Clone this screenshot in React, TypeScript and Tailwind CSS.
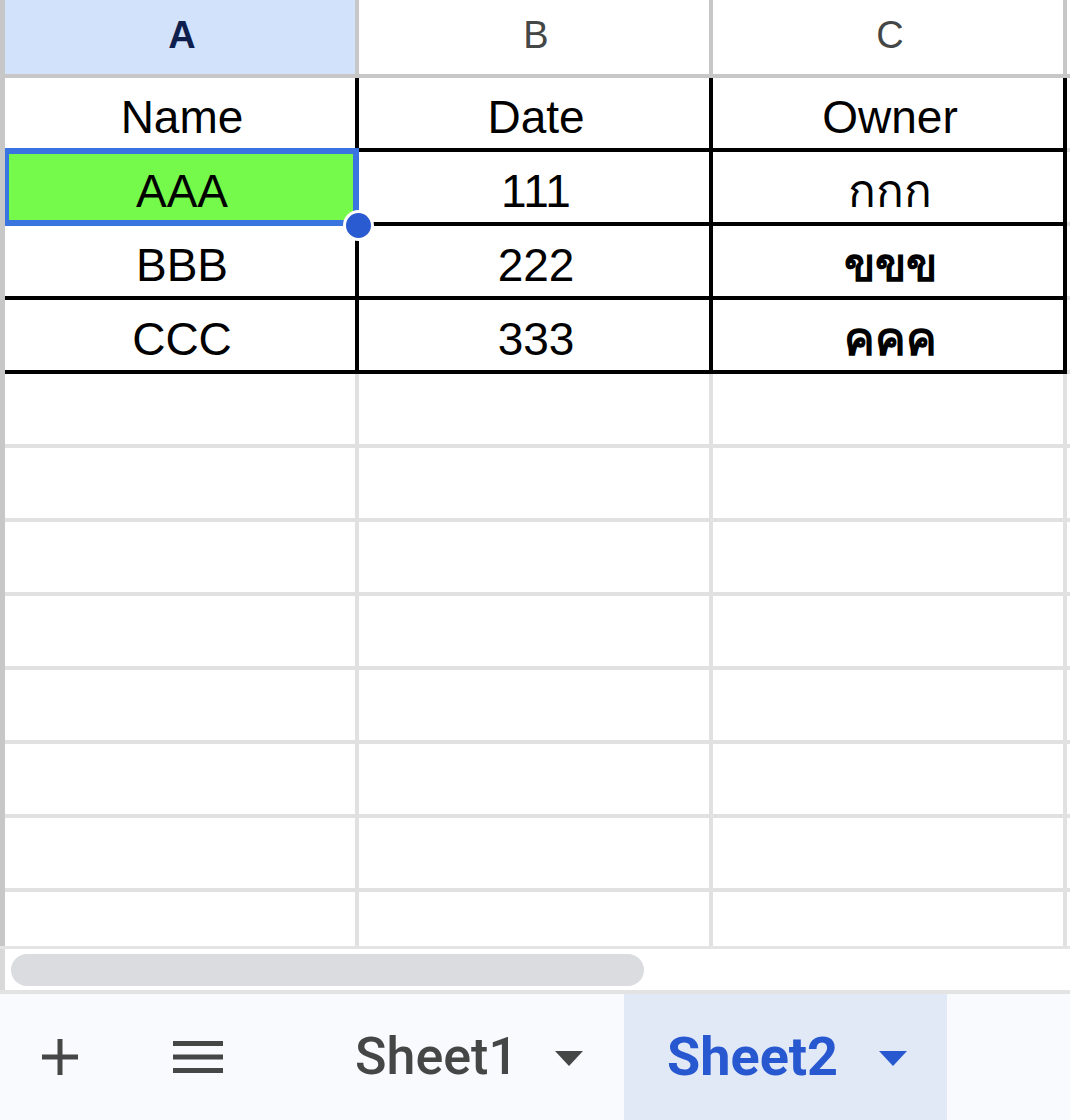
const cols = ["A", "B", "C"];

const rows = [
  ["Name", "Date", "Owner"],
  ["AAA", "111", "กกก"],
  ["BBB", "222", "ขขข"],
  ["CCC", "333", "คคค"],
];

const cellFont = "font-['Liberation_Sans','Noto_Sans','DejaVu_Sans',sans-serif]";

function HeaderRow() {
  return (
    <div className="flex h-[78px]">
      <div className="w-[5px] bg-[#c7c7c7]" />
      {cols.map((c, i) => (
        <div
          key={c}
          className={`flex w-[354px] items-center justify-center border-r-4 border-b-4 border-[#c7c7c7] pb-[5px] pl-1 text-[38px] leading-none ${
            i === 0 ? "bg-[#d3e2fb] font-bold text-[#0e1f4d]" : "bg-white text-[#444746]"
          }`}
        >
          {c}
        </div>
      ))}
      <div className="flex-1 border-b-4 border-[#c7c7c7]" />
    </div>
  );
}

function DataRow({ cells, index }: { cells: string[]; index: number }) {
  return (
    <div className="flex h-[74px]">
      <div className="w-[5px] bg-[#c7c7c7]" />
      {cells.map((text, i) => {
        const selected = index === 1 && i === 0;
        const thaiBold = i === 2 && index > 1;
        return (
          <div
            key={i}
            className={`relative flex w-[354px] items-end justify-center border-r-4 border-b-4 border-black pb-2 pl-1 text-[46px] leading-none text-black ${
              selected ? "bg-[#75fa4c]" : "bg-white"
            } ${thaiBold ? "font-bold" : ""}`}
          >
            {selected && (
              <div className="absolute -top-1 left-0 h-[78px] w-[354px] border-y-[6px] border-r-[6px] border-l-4 border-[#3a74e0]" />
            )}
            <span className="relative">{text}</span>
          </div>
        );
      })}
      <div className="flex-1 border-b-4 border-[#e1e1e1]" />
    </div>
  );
}

function EmptyRow({ last }: { last?: boolean }) {
  const b = last ? "" : "border-b-4";
  return (
    <div className={`flex ${last ? "h-[54px]" : "h-[74px]"}`}>
      <div className="w-[5px] bg-[#c7c7c7]" />
      {cols.map((c) => (
        <div key={c} className={`w-[354px] border-r-4 ${b} border-[#e1e1e1]`} />
      ))}
      <div className={`flex-1 ${b} border-[#e1e1e1]`} />
    </div>
  );
}

function Caret({ color }: { color: string }) {
  return (
    <svg width="28" height="15" viewBox="0 0 28 15">
      <path d="M0 0 L28 0 L14 15 Z" fill={color} />
    </svg>
  );
}

export default function App() {
  return (
    <div className={`flex h-[1120px] w-[1070px] flex-col overflow-hidden bg-white ${cellFont}`}>
      <div className="relative h-[946px] overflow-hidden">
        <HeaderRow />
        {rows.map((r, i) => (
          <DataRow key={i} cells={r} index={i} />
        ))}
        {Array.from({ length: 7 }).map((_, i) => (
          <EmptyRow key={i} />
        ))}
        <EmptyRow last />
        {/* fill handle */}
        <div className="absolute left-[343px] top-[210px] h-[31px] w-[31px] rounded-full border-[3px] border-white bg-[#2a5bd0]" />
      </div>

      {/* horizontal scrollbar */}
      <div className="flex h-[44px] border-t-[3px] border-[#e3e4e3]">
        <div className="w-[5px] bg-[#d9d9d9]" />
        <div className="flex flex-1 items-center pl-[6px]">
          <div className="h-[32px] w-[633px] rounded-full bg-[#dadce0]" />
        </div>
      </div>

      {/* sheet tabs */}
      <div className="flex h-[130px] items-stretch border-t-4 border-[#e3e3e3] bg-[#f8fafd] font-['Roboto',sans-serif]">
        <div className="flex w-[117px] items-center justify-center pl-[2px]">
          <svg width="36" height="36" viewBox="0 0 36 36">
            <rect x="15.5" y="0" width="5" height="36" fill="#444746" />
            <rect x="0" y="15.5" width="36" height="5" fill="#444746" />
          </svg>
        </div>
        <div className="flex w-[117px] items-center pl-[56px]">
          <svg width="50" height="33" viewBox="0 0 50 33">
            <rect x="0" y="0" width="50" height="5" fill="#444746" />
            <rect x="0" y="13.5" width="50" height="5" fill="#444746" />
            <rect x="0" y="27" width="50" height="5" fill="#444746" />
          </svg>
        </div>
        <div className="flex w-[390px] items-center pl-[121px]">
          <span className="text-[52px] font-medium leading-none text-[#444746]">Sheet1</span>
          <span className="ml-[37px] mt-[2px]">
            <Caret color="#444746" />
          </span>
        </div>
        <div className="flex w-[323px] items-center bg-[#e1e9f7] pl-[43px]">
          <span className="text-[54px] font-bold leading-none text-[#2858d0]">Sheet2</span>
          <span className="ml-[41px] mt-[2px]">
            <Caret color="#2858d0" />
          </span>
        </div>
      </div>
    </div>
  );
}
